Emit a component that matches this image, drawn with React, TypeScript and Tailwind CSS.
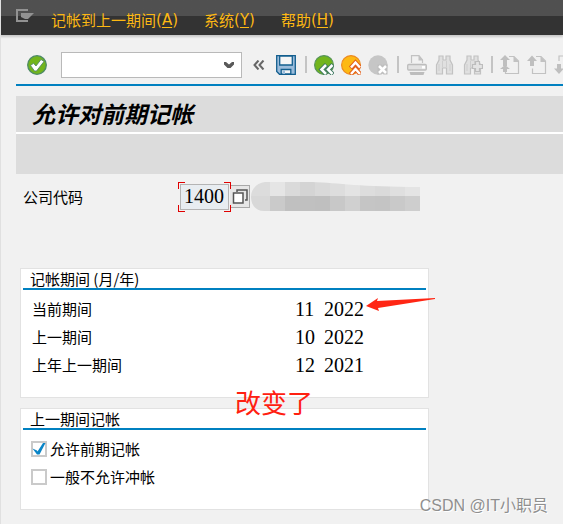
import type { ReactNode } from "react";

const cjk = "font-['Noto_Sans_CJK_SC',sans-serif]";
const digits = "font-['Liberation_Serif',serif] text-xl leading-7";

function MenuItem({ label, hotkey }: { label: string; hotkey: string }) {
  return (
    <button type="button" className="flex items-center whitespace-nowrap text-[15px] leading-5 text-[#fdb813]">
      {label}
      <span className="font-['DejaVu_Sans',sans-serif] text-[15px] leading-5">
        (<span className="underline underline-offset-2">{hotkey}</span>)
      </span>
    </button>
  );
}

function Tool({ label, disabled, children }: { label: string; disabled?: boolean; children: ReactNode }) {
  return (
    <button type="button" aria-label={label} disabled={disabled} className="size-5 shrink-0">
      <svg viewBox="0 0 20 20" className="size-5" fill="none">
        {children}
      </svg>
    </button>
  );
}

function Divider() {
  return <span className="h-[17px] w-0.5 shrink-0 bg-[#c4c4c4]" />;
}

function Binoculars() {
  return (
    <g>
      <path
        d="M4 1h4v4h3V1h4v4l2.500 5v9h-6v-6h-4v6h-6v-9L4 5z"
        fill="#e0e0e0"
        stroke="#c2c2c2"
        strokeWidth="1.200"
      />
      <path d="M7.500 6v6M11.500 6v6M4 9v7M15 9v7" stroke="#cecece" />
    </g>
  );
}

function Sheet() {
  return (
    <g>
      <path d="M9 1.500h5l4.500 4.500v12.500h-13v-5" stroke="#c2c2c2" strokeWidth="1.200" />
      <path d="M13.500 1l5.500 6h-5.500z" fill="#c2c2c2" />
    </g>
  );
}

function Toolbar() {
  return (
    <div className="ml-4 flex h-[45px] items-center overflow-hidden border-b-2 border-[#0080c0] pl-[11px] pt-1">
      <Tool label="确认">
        <circle cx="10" cy="10" r="9.300" fill="#72b51c" stroke="#4d8a66" strokeWidth="1.300" />
        <path
          d="M3.500 10.500l3-2.200 2.500 2.700 5-6.500 3 2L9.500 16H7.500z"
          fill="#fff"
          stroke="#47806a"
          strokeWidth="0.800"
        />
      </Tool>
      <div className="ml-3.5 flex h-[26px] w-[181px] shrink-0 items-center border border-[#b9b9b9] bg-white">
        <input aria-label="命令" className="h-full min-w-0 flex-1 px-1 text-[15px] outline-none" />
        <button type="button" aria-label="打开列表" className="mr-[7px]">
          <svg viewBox="0 0 10 8" className="h-2 w-2.5">
            <path d="M0 1h2l3 2.500L8 1h2v2.500L6.500 7h-3L0 3.500z" fill="#595959" />
          </svg>
        </button>
      </div>
      <button type="button" aria-label="折叠" className="ml-[11px] mr-[11px] shrink-0">
        <svg viewBox="0 0 12 10" className="h-2.5 w-3" fill="none" stroke="#666" strokeWidth="2">
          <path d="M5.500 .5L1.500 5l4 4.500M10.500 .5l-4 4.500 4 4.500" />
        </svg>
      </button>
      <Tool label="保存">
        <path d="M.7.700h18.600v18.600H3.500L.7 16.500z" fill="#9bbcdb" stroke="#135f8f" strokeWidth="1.300" />
        <path d="M3.700 1h12.600v9H3.700z" fill="#f5f5f5" stroke="#135f8f" strokeWidth="1.300" />
        <path d="M5.200 14.500h9.600V19H5.200z" fill="#f5f5f5" stroke="#135f8f" strokeWidth="1.300" />
        <path d="M6.500 15.500H9V19H6.500z" fill="#9bbcdb" />
      </Tool>
      <div className="ml-[9px] flex items-center gap-[7px]">
        <Divider />
        <Tool label="返回">
          <circle cx="10" cy="10" r="9.400" fill="#72b51c" stroke="#57945b" strokeWidth="1.200" />
          <path d="M12.500 9.500L7.500 14.500l5 5M19 9.500L14 14.500l5 5" stroke="#3d7860" strokeWidth="4.500" />
          <path d="M12 10L7.500 14.500 12 19M18.500 10L14 14.500l4.500 4.500" stroke="#fff" strokeWidth="2.500" />
        </Tool>
        <Tool label="退出">
          <circle cx="10" cy="10" r="9.400" fill="#fdb913" stroke="#ed8a22" strokeWidth="1.200" />
          <path d="M9.500 13l5-5.500 5 5.500M9.500 19.500l5-5.500 5 5.500" stroke="#e2601c" strokeWidth="4.500" />
          <path d="M10 12.500l4.500-5 4.500 5M10 19l4.500-5 4.500 5" stroke="#fff" strokeWidth="2.500" />
        </Tool>
        <Tool label="取消" disabled>
          <circle cx="10" cy="10" r="9.700" fill="#c6c6c6" />
          <path d="M9.500 9.500h4l1 1 1-1h4v10h-4l-1-1-1 1h-4z" fill="#bebebe" />
          <path d="M11 11l7 7M18 11l-7 7" stroke="#fff" strokeWidth="2.500" />
        </Tool>
      </div>
      <div className="ml-[9px] flex items-center gap-2">
        <Divider />
        <Tool label="打印" disabled>
          <path d="M4.500 8V.700H12L15.500 5v3" stroke="#c2c2c2" strokeWidth="1.200" />
          <path d="M11.500 0l4.500 5.500h-4.500z" fill="#c2c2c2" />
          <rect x=".7" y="9.500" width="18.600" height="5.500" rx="1" fill="#e2e2e2" stroke="#bdbdbd" strokeWidth="1.300" />
          <path d="M15 11h3v2.500h-3z" fill="#fff" />
          <path d="M2.500 17h15l-1 3h-13z" fill="#bdbdbd" />
        </Tool>
        <Tool label="查找" disabled>
          <Binoculars />
        </Tool>
        <Tool label="继续查找" disabled>
          <Binoculars />
          <path d="M12.500 6.500h4v3h3v4h-3v3h-4v-3h-3v-4h3z" fill="#e4e4e4" stroke="#bdbdbd" strokeWidth="1.200" />
        </Tool>
      </div>
      <div className="ml-2 flex items-center gap-[7px]">
        <Divider />
        <Tool label="首页" disabled>
          <Sheet />
          <path d="M5 0l5 5H7v3H3V5H0zM5 10l5 4H7v3H3v-3H0z" fill="#bfbfbf" />
          <path d="M3 7h4v4H3z" fill="#bfbfbf" />
        </Tool>
        <Tool label="上一页" disabled>
          <Sheet />
          <path d="M5 .5l5 5.500H7v5H3V6H0z" fill="#bfbfbf" />
        </Tool>
        <Tool label="下一页" disabled>
          <path d="M5 6V1h10" stroke="#c2c2c2" strokeWidth="1.200" />
          <path d="M5 19l5-5.500H7V9H3v4.500H0z" fill="#bfbfbf" />
        </Tool>
      </div>
    </div>
  );
}

function Group({ title, children }: { title: string; children: ReactNode }) {
  return (
    <section className="max-w-[409px] border border-[#e2e2e2] bg-white px-0.5 pb-[18px]">
      <h2 className="mb-[5px] flex h-[21px] items-center border-b-2 border-[#0080c0] pl-[7px]">{title}</h2>
      <div className="px-2">{children}</div>
    </section>
  );
}

const periods = [
  { name: "当前期间", month: 11, year: 2022 },
  { name: "上一期间", month: 10, year: 2022 },
  { name: "上年上一期间", month: 12, year: 2021 },
];

function Check({ label, on }: { label: string; on?: boolean }) {
  return (
    <label className="flex h-7 items-center gap-[3px]">
      <span className="relative flex">
        <input
          type="checkbox"
          defaultChecked={on}
          className="peer size-4 appearance-none border-2 border-[#cacaca] bg-white"
        />
        <svg
          viewBox="0 0 16 16"
          className="pointer-events-none absolute inset-0 hidden size-4 peer-checked:block"
          fill="none"
        >
          <path d="M1.500 7.500l4.500 2 .5 1L12 2h2.500L8.500 13.500H6z" fill="#0a85c7" />
        </svg>
      </span>
      {label}
    </label>
  );
}

const mosaic = [
  ["#dcdcdc", "#d8d8d8"],
  ["#dcdcdc", "#d8d8d8"],
  ["#e5e5e5", "#cacaca"],
  ["#dadada", "#c0c0c0"],
  ["#d4d4d4", "#c0c0c0"],
  ["#d9d9d9", "#bfbfbf"],
  ["#dddddd", "#c8c8c8"],
  ["#e3e3e3", "#d0d0d0"],
  ["#dddddd", "#c5c5c5"],
  ["#dadada", "#c4c4c4"],
  ["#dfdfdf", "#c9c9c9"],
  ["#e4e4e4", "#cecece"],
  ["#d6d6d6", "#c9c9c9"],
];

export default function App() {
  return (
    <div className={`relative min-h-screen overflow-hidden border-l border-[#e0e0e0] bg-[#f1f1f1] text-[15px] leading-5 text-black ${cjk}`}>
      <header className="-ml-px flex h-[35px] items-center gap-[26px] bg-linear-to-b from-[#505050] from-46% to-[#333333] to-46% pl-4 pt-[5px] shadow-[0_2px_2px_#c8c8c8]">
        <button type="button" aria-label="菜单" className="-mr-[9px] mb-2.5">
          <svg viewBox="0 0 18 13" className="h-[13px] w-[18px]" fill="none">
            <path d="M12 1H1v11h11" stroke="#929292" strokeWidth="2" />
            <path d="M5 4h13l-6 6H9L5 8z" fill="#929292" />
          </svg>
        </button>
        <MenuItem label="记帐到上一期间" hotkey="A" />
        <MenuItem label="系统" hotkey="Y" />
        <MenuItem label="帮助" hotkey="H" />
      </header>

      <div className="-ml-px pt-1.5">
        <Toolbar />

        <div className="ml-4 mt-2.5 flex flex-col gap-0.5 bg-white">
          <h1 className="flex h-9 items-center bg-[#dcdcdc] pb-0.5 pl-4 text-[23px] font-bold italic leading-8">
            允许对前期记帐
          </h1>
          <div className="h-10 bg-[#dcdcdc]" />
        </div>

        <div className="mt-[7px] flex h-[31px] items-center pl-[23px]">
          <label htmlFor="company" className="w-[155px]">
            公司代码
          </label>
          <div className="relative p-0.5">
            <input
              id="company"
              defaultValue="1400"
              className="block h-[26px] w-[49px] border border-[#b4b4b4] bg-[#e8edf1] pl-[3px] font-['Liberation_Serif',serif] text-xl leading-6 outline-none"
            />
            <span className="absolute left-0 top-0 size-[7px] border-l border-t border-[#e00000]" />
            <span className="absolute right-0 top-0 size-[7px] border-r border-t border-[#e00000]" />
            <span className="absolute bottom-0 left-0 size-[7px] border-b border-l border-[#e00000]" />
            <span className="absolute bottom-0 right-0 size-[7px] border-b border-r border-[#e00000]" />
          </div>
          <button
            type="button"
            aria-label="搜索帮助"
            className="-ml-px flex h-[23px] w-5 items-center justify-center border border-l-0 border-[#a8a8a8] bg-[#e6e6e6]"
          >
            <svg viewBox="0 0 16 15" className="h-[15px] w-4" fill="none" stroke="#555">
              <path d="M5 3V1h10v10h-2" strokeWidth="1.500" />
              <rect x="1.500" y="4" width="9.500" height="10" fill="#fff" strokeWidth="1.500" />
            </svg>
          </button>
          <svg viewBox="0 0 170 29" className="h-[29px] w-[170px]" aria-hidden="true">
            <clipPath id="smudge">
              <path d="M15 0H62C90 1 110 5 170 5V29H14C5 29 1 22 1 15S6 1 15 0Z" />
            </clipPath>
            <g clipPath="url(#smudge)">
              {mosaic.map(([top, bottom], i) => (
                <g key={i}>
                  <rect x={i * 15 - 10} y="0" width="15" height="14" fill={top} />
                  <rect x={i * 15 - 10} y="14" width="15" height="15" fill={bottom} />
                </g>
              ))}
            </g>
          </svg>
        </div>

        <main className="mt-[56px] flex flex-col gap-2.5 pl-5 pr-4">
          <div className="relative">
            <Group title="记帐期间 (月/年)">
              <table className="w-full">
                <tbody>
                  {periods.map((p) => (
                    <tr key={p.name} className="h-7">
                      <th scope="row" className="w-[264px] p-0 pl-px text-left font-normal">
                        {p.name}
                      </th>
                      <td className={`w-[29px] p-0 ${digits}`}>{p.month}</td>
                      <td className={`p-0 ${digits}`}>{p.year}</td>
                    </tr>
                  ))}
                </tbody>
              </table>
            </Group>
            <svg viewBox="0 0 70 16" className="absolute left-[346px] top-[29px] h-4 w-[70px]" aria-hidden="true">
              <path d="M0 9L12 1l-1 3L69 1v1L12 11l1 3z" fill="#ff2614" />
            </svg>
            <p className="absolute left-[215px] top-[118px] text-[26px] leading-8 text-[#ff2010]">改变了</p>
          </div>
          <Group title="上一期间记帐">
            <Check label="允许前期记帐" on />
            <Check label="一般不允许冲帐" />
          </Group>
        </main>
      </div>

      <p className="absolute bottom-1.5 right-[15px] font-['Liberation_Sans','Noto_Sans_CJK_SC',sans-serif] text-base leading-6 text-[#8f8f8f] [text-shadow:1px_1px_0_#fff]">
        CSDN @IT小职员
      </p>
    </div>
  );
}
